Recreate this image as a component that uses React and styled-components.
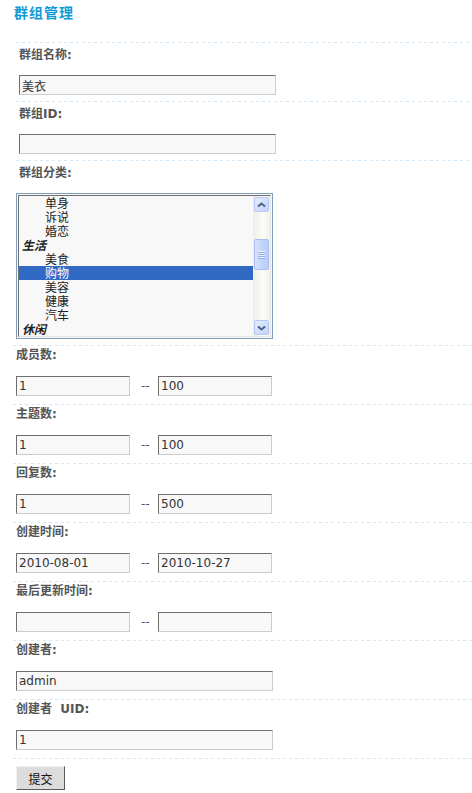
import React from 'react';
import styled, { createGlobalStyle } from 'styled-components';

const GlobalStyle = createGlobalStyle`
  body {
    margin: 0;
    background: #fff;
    font-family: "DejaVu Sans", "Noto Sans CJK SC", sans-serif;
    font-size: 12px;
    color: #555;
  }
`;

const Page = styled.div`
  width: 472px;
`;

const Title = styled.h2`
  margin: 0 0 16px;
  padding-left: 14px;
  height: 26px;
  line-height: 26px;
  font-size: 14px;
  letter-spacing: 1px;
  font-weight: bold;
  color: #1199d5;
`;

const Form = styled.form`
  margin: 0 0 0 16px;
`;

const dashed = 'repeating-linear-gradient(to right, #d3e7f7 0 3px, transparent 3px 6px)';

const Row = styled.div`
  background: ${dashed} top left / 100% 1px no-repeat;
  padding: ${p => (p.$top ? '5px 0 6px' : '2px 0 8px 3px')};
  margin-left: ${p => (p.$top ? '0' : '-3px')};
`;

const Label = styled.div`
  line-height: 16px;
  font-weight: bold;
  color: #555;
  white-space: pre;
  padding-left: ${p => (p.$top ? 3 : 0)}px;
  margin-bottom: ${p => (p.$top ? 12 : 13)}px;
`;

const TextInput = styled.input`
  box-sizing: border-box;
  display: block;
  width: ${p => p.$w || 257}px;
  height: 20px;
  margin: 0 0 0 ${p => (p.$top ? 3 : 0)}px;
  padding: 0 2px;
  border: 1px solid #cccccc;
  border-top-color: #6e6e6e;
  border-left-color: #6e6e6e;
  background: #f8f8f8;
  font: 12px "DejaVu Sans", "Noto Sans CJK SC", sans-serif;
  color: #333;
  outline: none;
`;

const Range = styled.div`
  display: flex;
  align-items: center;
`;

const Sep = styled.span`
  width: 28px;
  padding-left: 11px;
  box-sizing: border-box;
  color: #555;
  font-size: 12px;
`;

const ListBox = styled.div`
  box-sizing: border-box;
  width: 257px;
  height: 146px;
  border: 1px solid #7f9db9;
  padding: 1px;
  background: #f8f8f8;
  display: flex;
`;

const ListInner = styled.div`
  flex: 1;
  display: flex;
  border: 1px solid #e4e4e4;
  border-top-color: #6f6f6f;
  border-left-color: #6f6f6f;
`;

const Options = styled.div`
  flex: 1;
  overflow: hidden;
  font-family: "Noto Sans CJK SC", sans-serif;
`;

const Option = styled.div`
  height: 14px;
  line-height: 14px;
  padding-left: ${p => (p.$group ? 3 : 26)}px;
  font-weight: ${p => (p.$group ? 'bold' : 'normal')};
  font-style: ${p => (p.$group ? 'italic' : 'normal')};
  background: ${p => (p.$selected ? '#316ac5' : 'transparent')};
  color: ${p => (p.$selected ? '#fff' : '#222')};
`;

const ScrollBar = styled.div`
  width: 17px;
  display: flex;
  flex-direction: column;
  background: linear-gradient(to right, #eeede5, #fbfbf8 60%, #f1f0ea);
`;

const ScrollButton = styled.div`
  box-sizing: border-box;
  width: 15px;
  height: 15px;
  margin: 1px 1px 1px 1px;
  border: 1px solid #b4c8f5;
  border-radius: 2px;
  background: linear-gradient(135deg, #e4ecfe, #c2d4fb);
  display: flex;
  align-items: center;
  justify-content: center;
`;

const Track = styled.div`
  flex: 1;
  padding-top: ${p => p.$offset}px;
`;

const Thumb = styled.div`
  box-sizing: border-box;
  width: 15px;
  height: 31px;
  margin-left: 1px;
  border: 1px solid #a8bef2;
  border-radius: 2px;
  background: linear-gradient(to right, #d5e2fd, #c4d5fb 50%, #b9cdf8);
  display: flex;
  flex-direction: column;
  align-items: center;
  justify-content: center;
  gap: 1px;
`;

const Grip = styled.div`
  width: 7px;
  height: 1px;
  background: #eef3fe;
  box-shadow: 0 1px 0 #8eacec;
`;

const Submit = styled.button`
  display: block;
  box-sizing: border-box;
  width: 49px;
  height: 24px;
  padding: 0;
  margin-top: 6px;
  background: #dcdcdc;
  border: 1px solid;
  border-color: #f2f2f2 #5a5a5a #5a5a5a #f2f2f2;
  font: 12px "Noto Sans CJK SC", sans-serif;
  color: #111;
`;

const FootRow = styled.div`
  background: ${dashed} top left / 100% 1px no-repeat;
  padding-top: 2px;
  margin-left: -3px;
  padding-left: 3px;
`;

const Arrow = ({ down }) => (
  <svg width="9" height="6" viewBox="0 0 9 6">
    <path
      d={down ? 'M1 1.5 L4.5 4.5 L8 1.5' : 'M1 4.5 L4.5 1.5 L8 4.5'}
      fill="none"
      stroke="#4d6185"
      strokeWidth="2"
    />
  </svg>
);

const options = [
  { text: '单身' },
  { text: '诉说' },
  { text: '婚恋' },
  { text: '生活', group: true },
  { text: '美食' },
  { text: '购物', selected: true },
  { text: '美容' },
  { text: '健康' },
  { text: '汽车' },
  { text: '休闲', group: true },
];

const ranges = [
  { label: '成员数:', from: '1', to: '100' },
  { label: '主题数:', from: '1', to: '100' },
  { label: '回复数:', from: '1', to: '500' },
  { label: '创建时间:', from: '2010-08-01', to: '2010-10-27' },
  { label: '最后更新时间:', from: '', to: '' },
];

function App() {
  return (
    <Page>
      <GlobalStyle />
      <Title>群组管理</Title>
      <Form onSubmit={e => e.preventDefault()}>
        <Row $top>
          <Label $top>群组名称:</Label>
          <TextInput $top defaultValue="美衣" />
        </Row>
        <Row $top>
          <Label $top>群组ID:</Label>
          <TextInput $top defaultValue="" />
        </Row>
        <Row $top>
          <Label $top>群组分类:</Label>
          <ListBox>
            <ListInner>
              <Options>
                {options.map(o => (
                  <Option key={o.text} $group={o.group} $selected={o.selected}>
                    {o.text}
                  </Option>
                ))}
              </Options>
              <ScrollBar>
                <ScrollButton>
                  <Arrow />
                </ScrollButton>
                <Track $offset={26}>
                  <Thumb>
                    <Grip />
                    <Grip />
                    <Grip />
                    <Grip />
                  </Thumb>
                </Track>
                <ScrollButton>
                  <Arrow down />
                </ScrollButton>
              </ScrollBar>
            </ListInner>
          </ListBox>
        </Row>
        {ranges.map(r => (
          <Row key={r.label}>
            <Label>{r.label}</Label>
            <Range>
              <TextInput $w={114} defaultValue={r.from} />
              <Sep>--</Sep>
              <TextInput $w={114} defaultValue={r.to} />
            </Range>
          </Row>
        ))}
        <Row>
          <Label>创建者:</Label>
          <TextInput defaultValue="admin" />
        </Row>
        <Row>
          <Label>创建者  UID:</Label>
          <TextInput defaultValue="1" />
        </Row>
        <FootRow>
          <Submit type="submit">提交</Submit>
        </FootRow>
      </Form>
    </Page>
  );
}

export default App;
